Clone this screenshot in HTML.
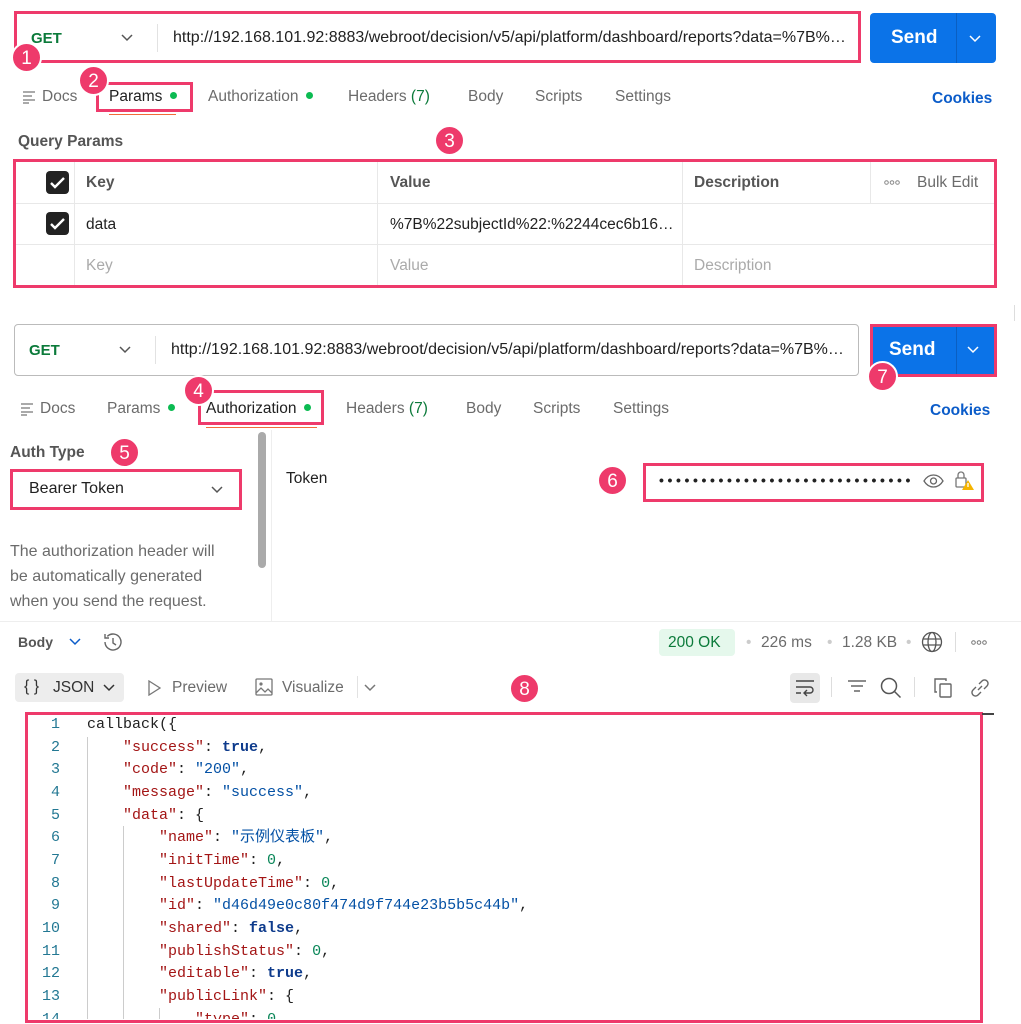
<!DOCTYPE html>
<html><head><meta charset="utf-8">
<style>
*{margin:0;padding:0;box-sizing:border-box}
body{width:1021px;height:1024px;background:#fff;position:relative;overflow:hidden;font-family:"Liberation Sans","Noto Sans CJK SC",sans-serif;color:#212121;font-size:15.5px}
.a{position:absolute;white-space:nowrap}
.pk{position:absolute;border:3px solid #ee3a6b}
.b{position:absolute;width:31px;height:31px;border-radius:50%;background:#ee3a6b;color:#fff;font-size:19px;text-align:center;line-height:29px;border:2px solid #fff}
.g{color:#6b6b6b}
.dot{display:inline-block;width:7px;height:7px;border-radius:50%;background:#0cbb52;margin-left:8px;vertical-align:2px}
.mono{font-family:"Liberation Mono","Noto Sans CJK SC",monospace;font-size:15px}
.k{color:#a31515}.s{color:#0451a5}.n{color:#098658}.t{color:#0e3b8c;font-weight:bold}
.ln{position:absolute;width:34px;text-align:right;color:#237893;left:26px}
.vl{position:absolute;width:1px;background:#ccc}
</style></head><body>

<!-- Section 1 -->
<div class="pk" style="left:14px;top:11px;width:847px;height:52px"></div>
<div class="a" style="left:31px;top:30px;color:#0b7a3a;font-weight:bold;font-size:15px">GET</div>
<svg class="a" style="left:121px;top:34px" width="12" height="8"><path d="M1 1l5 5 5-5" stroke="#555" fill="none" stroke-width="1.5"/></svg>
<div class="a" style="left:157px;top:24px;width:1px;height:28px;background:#e2e2e2"></div>
<div class="a" style="left:173px;top:29px;font-size:16px">http://192.168.101.92:8883/webroot/decision/v5/api/platform/dashboard/reports?data=%7B%…</div>
<div class="a" style="left:870px;top:13px;width:126px;height:50px;background:#0b73e8;border-radius:4px"></div>
<div class="a" style="left:891px;top:27px;color:#fff;font-weight:bold;font-size:19px">Send</div>
<div class="a" style="left:956px;top:13px;width:1px;height:50px;background:#0a5fc2"></div>
<svg class="a" style="left:969px;top:35px" width="12" height="8"><path d="M1 1l5 5 5-5" stroke="#fff" fill="none" stroke-width="1.5"/></svg>
<div class="b" style="left:11px;top:42px">1</div>

<svg class="a" style="left:22px;top:90px" width="14" height="14"><path d="M1 2h12M1 6h9M1 10h12M1 13h6" stroke="#777" stroke-width="1.3"/></svg>
<div class="a g" style="left:42px;top:88px">Docs</div>
<div class="a" style="left:109px;top:88px">Params<span class="dot"></span></div>
<div class="pk" style="left:96px;top:82px;width:97px;height:30px;"></div>
<div class="a" style="left:109px;top:114px;width:67px;height:1px;background:#f26b3a"></div>
<div class="b" style="left:78px;top:65px">2</div>
<div class="a g" style="left:208px;top:88px">Authorization<span class="dot"></span></div>
<div class="a g" style="left:348px;top:88px">Headers <span style="color:#0b7a3a">(7)</span></div>
<div class="a g" style="left:468px;top:88px">Body</div>
<div class="a g" style="left:535px;top:88px">Scripts</div>
<div class="a g" style="left:615px;top:88px">Settings</div>
<div class="a" style="left:932px;top:90px;color:#0b5cc9;font-weight:bold">Cookies</div>

<div class="a" style="left:18px;top:133px;font-weight:bold;color:#555">Query Params</div>
<div class="b" style="left:434px;top:125px">3</div>
<div class="pk" style="left:13px;top:159px;width:984px;height:129px"></div>
<div class="a" style="left:16px;top:203px;width:978px;height:1px;background:#e8e8e8"></div>
<div class="a" style="left:16px;top:244px;width:978px;height:1px;background:#e8e8e8"></div>
<div class="a" style="left:74px;top:162px;width:1px;height:123px;background:#e8e8e8"></div>
<div class="a" style="left:377px;top:162px;width:1px;height:123px;background:#e8e8e8"></div>
<div class="a" style="left:682px;top:162px;width:1px;height:123px;background:#e8e8e8"></div>
<div class="a" style="left:870px;top:162px;width:1px;height:41px;background:#e8e8e8"></div>
<svg class="a" style="left:46px;top:171px" width="23" height="23"><rect width="23" height="23" rx="4" fill="#222"/><path d="M5 12l4 4 9-9" stroke="#fff" stroke-width="2.4" fill="none"/></svg>
<svg class="a" style="left:46px;top:212px" width="23" height="23"><rect width="23" height="23" rx="4" fill="#222"/><path d="M5 12l4 4 9-9" stroke="#fff" stroke-width="2.4" fill="none"/></svg>
<div class="a" style="left:86px;top:174px;font-weight:bold;color:#555">Key</div>
<div class="a" style="left:390px;top:174px;font-weight:bold;color:#555">Value</div>
<div class="a" style="left:694px;top:174px;font-weight:bold;color:#555">Description</div>
<svg class="a" style="left:884px;top:180px" width="16" height="5"><circle cx="2.5" cy="2.5" r="1.8" fill="none" stroke="#888"/><circle cx="8" cy="2.5" r="1.8" fill="none" stroke="#888"/><circle cx="13.5" cy="2.5" r="1.8" fill="none" stroke="#888"/></svg>
<div class="a g" style="left:917px;top:174px">Bulk Edit</div>
<div class="a" style="left:86px;top:216px">data</div>
<div class="a" style="left:390px;top:216px">%7B%22subjectId%22:%2244cec6b16…</div>
<div class="a" style="left:86px;top:257px;color:#aaa">Key</div>
<div class="a" style="left:390px;top:257px;color:#aaa">Value</div>
<div class="a" style="left:694px;top:257px;color:#aaa">Description</div>

<div class="a" style="left:1014px;top:305px;width:1px;height:16px;background:#ddd"></div>

<!-- Section 2 -->
<div class="a" style="left:14px;top:324px;width:845px;height:52px;border:1px solid #bbb;border-radius:4px"></div>
<div class="a" style="left:29px;top:342px;color:#0b7a3a;font-weight:bold;font-size:15px">GET</div>
<svg class="a" style="left:119px;top:346px" width="12" height="8"><path d="M1 1l5 5 5-5" stroke="#555" fill="none" stroke-width="1.5"/></svg>
<div class="a" style="left:155px;top:336px;width:1px;height:28px;background:#e2e2e2"></div>
<div class="a" style="left:171px;top:341px;font-size:16px">http://192.168.101.92:8883/webroot/decision/v5/api/platform/dashboard/reports?data=%7B%…</div>
<div class="a" style="left:870px;top:324px;width:127px;height:53px;background:#0b73e8;border:3px solid #ee3a6b"></div>
<div class="a" style="left:889px;top:339px;color:#fff;font-weight:bold;font-size:19px">Send</div>
<div class="a" style="left:956px;top:327px;width:1px;height:47px;background:#0a5fc2"></div>
<svg class="a" style="left:967px;top:346px" width="12" height="8"><path d="M1 1l5 5 5-5" stroke="#fff" fill="none" stroke-width="1.5"/></svg>
<div class="b" style="left:867px;top:361px">7</div>

<svg class="a" style="left:20px;top:402px" width="14" height="14"><path d="M1 2h12M1 6h9M1 10h12M1 13h6" stroke="#777" stroke-width="1.3"/></svg>
<div class="a g" style="left:40px;top:400px">Docs</div>
<div class="a g" style="left:107px;top:400px">Params<span class="dot"></span></div>
<div class="a" style="left:206px;top:400px">Authorization<span class="dot"></span></div>
<div class="pk" style="left:198px;top:390px;width:126px;height:35px"></div>
<div class="a" style="left:206px;top:427px;width:111px;height:1px;background:#f26b3a"></div>
<div class="b" style="left:183px;top:375px">4</div>
<div class="a g" style="left:346px;top:400px">Headers <span style="color:#0b7a3a">(7)</span></div>
<div class="a g" style="left:466px;top:400px">Body</div>
<div class="a g" style="left:533px;top:400px">Scripts</div>
<div class="a g" style="left:613px;top:400px">Settings</div>
<div class="a" style="left:930px;top:402px;color:#0b5cc9;font-weight:bold">Cookies</div>

<div class="a" style="left:10px;top:444px;font-weight:bold;color:#555">Auth Type</div>
<div class="b" style="left:109px;top:437px">5</div>
<div class="pk" style="left:10px;top:469px;width:232px;height:41px"></div>
<div class="a" style="left:29px;top:480px;font-size:16px">Bearer Token</div>
<svg class="a" style="left:211px;top:486px" width="12" height="8"><path d="M1 1l5 5 5-5" stroke="#555" fill="none" stroke-width="1.5"/></svg>
<div class="a g" style="left:10px;top:543px;font-size:16px">The authorization header will</div>
<div class="a g" style="left:10px;top:568px;font-size:16px">be automatically generated</div>
<div class="a g" style="left:10px;top:593px;font-size:16px">when you send the request.</div>
<div class="a" style="left:258px;top:432px;width:8px;height:136px;background:#aaa;border-radius:4px"></div>
<div class="a" style="left:271px;top:430px;width:1px;height:191px;background:#eee"></div>
<div class="a" style="left:286px;top:470px">Token</div>
<div class="b" style="left:597px;top:465px">6</div>
<div class="pk" style="left:643px;top:463px;width:341px;height:39px"></div>
<div class="a" style="left:659px;top:472px;font-size:14px;letter-spacing:3.6px;font-weight:bold;color:#222">••••••••••••••••••••••••••••••</div>
<svg class="a" style="left:923px;top:474px" width="21" height="14"><path d="M1 7C4 2 8 1 10.5 1S17 2 20 7C17 12 13 13 10.5 13S4 12 1 7z" fill="none" stroke="#666" stroke-width="1.3"/><circle cx="10.5" cy="7" r="3" fill="none" stroke="#666" stroke-width="1.3"/></svg>
<svg class="a" style="left:955px;top:471px" width="20" height="20"><rect x="1" y="7" width="10" height="9" rx="1" fill="none" stroke="#777" stroke-width="1.3"/><path d="M3 7V4a3 3 0 016 0v3" fill="none" stroke="#777" stroke-width="1.3"/><path d="M13 9l6 10h-12z" fill="#f5b400"/><path d="M13 12v4" stroke="#fff" stroke-width="1.3"/></svg>

<div class="a" style="left:0;top:621px;width:1021px;height:1px;background:#eee"></div>

<!-- Section 3 -->
<div class="a" style="left:18px;top:634px;font-size:14px;font-weight:bold;color:#555">Body</div>
<svg class="a" style="left:69px;top:638px" width="12" height="8"><path d="M1 1l5 5 5-5" stroke="#0b5cc9" fill="none" stroke-width="1.5"/></svg>
<svg class="a" style="left:101px;top:631px" width="22" height="22"><path d="M4 11a8 8 0 1 0 2.3-5.6M4 3v4h4" fill="none" stroke="#666" stroke-width="1.4"/><path d="M12 7v5l3 2" fill="none" stroke="#666" stroke-width="1.4"/></svg>
<div class="a" style="left:659px;top:629px;width:76px;height:27px;background:#e5f8ec;border-radius:4px"></div>
<div class="a" style="left:668px;top:634px;color:#0b7a3a">200 OK</div>
<div class="a" style="left:746px;top:634px;color:#ccc">•</div>
<div class="a g" style="left:761px;top:634px">226 ms</div>
<div class="a" style="left:827px;top:634px;color:#ccc">•</div>
<div class="a g" style="left:842px;top:634px">1.28 KB</div>
<div class="a" style="left:906px;top:634px;color:#ccc">•</div>
<svg class="a" style="left:921px;top:631px" width="22" height="22"><circle cx="11" cy="11" r="9.5" fill="none" stroke="#555" stroke-width="1.3"/><ellipse cx="11" cy="11" rx="4" ry="9.5" fill="none" stroke="#555" stroke-width="1.3"/><path d="M2 8h18M2 14h18" stroke="#555" stroke-width="1.3"/></svg>
<div class="a" style="left:955px;top:632px;width:1px;height:20px;background:#ddd"></div>
<svg class="a" style="left:971px;top:640px" width="16" height="5"><circle cx="2.5" cy="2.5" r="1.8" fill="none" stroke="#777"/><circle cx="8" cy="2.5" r="1.8" fill="none" stroke="#777"/><circle cx="13.5" cy="2.5" r="1.8" fill="none" stroke="#777"/></svg>

<div class="a" style="left:15px;top:673px;width:109px;height:29px;background:#ededed;border-radius:4px"></div>
<div class="a" style="left:24px;top:678px;font-size:16px;color:#333">{ }</div>
<div class="a" style="left:53px;top:679px;color:#333">JSON</div>
<svg class="a" style="left:103px;top:684px" width="12" height="8"><path d="M1 1l5 5 5-5" stroke="#333" fill="none" stroke-width="1.5"/></svg>
<svg class="a" style="left:147px;top:680px" width="14" height="16"><path d="M2 1l11 7-11 7z" fill="none" stroke="#777" stroke-width="1.3"/></svg>
<div class="a g" style="left:172px;top:679px">Preview</div>
<svg class="a" style="left:255px;top:678px" width="18" height="18"><rect x="1" y="1" width="16" height="16" rx="1" fill="none" stroke="#777" stroke-width="1.3"/><circle cx="6" cy="6" r="1.6" fill="#777"/><path d="M1 15l5-5 4 4 3-3 4 4" fill="none" stroke="#777" stroke-width="1.3"/></svg>
<div class="a g" style="left:282px;top:679px">Visualize</div>
<div class="a" style="left:357px;top:676px;width:1px;height:22px;background:#e2e2e2"></div>
<svg class="a" style="left:364px;top:684px" width="12" height="8"><path d="M1 1l5 5 5-5" stroke="#777" fill="none" stroke-width="1.5"/></svg>
<div class="b" style="left:509px;top:673px">8</div>
<div class="a" style="left:790px;top:673px;width:30px;height:30px;background:#e8e8e8;border-radius:4px"></div>
<svg class="a" style="left:794px;top:678px" width="22" height="20"><path d="M2 3h18M2 9h14a3 3 0 010 6h-5M13 12l-3 3 3 3M2 15h5" fill="none" stroke="#444" stroke-width="1.4"/></svg>
<div class="a" style="left:831px;top:677px;width:1px;height:20px;background:#ddd"></div>
<svg class="a" style="left:847px;top:679px" width="20" height="16"><path d="M1 2h18M4 7h12M7 12h6" stroke="#666" stroke-width="1.4"/></svg>
<svg class="a" style="left:880px;top:677px" width="22" height="22"><circle cx="9" cy="9" r="7.5" fill="none" stroke="#555" stroke-width="1.5"/><path d="M14.5 14.5l6 6" stroke="#555" stroke-width="1.5"/></svg>
<div class="a" style="left:914px;top:677px;width:1px;height:20px;background:#ddd"></div>
<svg class="a" style="left:933px;top:677px" width="20" height="22"><path d="M4 15H2V2h11v2" fill="none" stroke="#666" stroke-width="1.4"/><rect x="7" y="7" width="11" height="13" rx="1" fill="none" stroke="#666" stroke-width="1.4"/></svg>
<svg class="a" style="left:969px;top:677px" width="22" height="22"><path d="M9 13l4-4M7 10l-3 3a3.5 3.5 0 005 5l3-3M15 12l3-3a3.5 3.5 0 00-5-5l-3 3" fill="none" stroke="#666" stroke-width="1.4"/></svg>

<div class="pk" style="left:25px;top:712px;width:958px;height:311px"></div>
<div class="a" style="left:982px;top:713px;width:12px;height:2px;background:#444"></div>
<div class="vl" style="left:87px;top:737px;height:282px"></div>
<div class="vl" style="left:123px;top:826px;height:193px"></div>
<div class="vl" style="left:159px;top:1008px;height:11px"></div>
<div class="a mono" style="left:28px;top:714px;width:950px;height:305px;overflow:hidden;line-height:22.67px">
<div class="ln" style="left:0;top:0;width:32px;line-height:22.67px">1<br>2<br>3<br>4<br>5<br>6<br>7<br>8<br>9<br>10<br>11<br>12<br>13<br>14</div>
<div class="a" style="left:59px;top:0;line-height:22.67px">callback({<br>
&nbsp;&nbsp;&nbsp;&nbsp;<span class="k">"success"</span>: <span class="t">true</span>,<br>
&nbsp;&nbsp;&nbsp;&nbsp;<span class="k">"code"</span>: <span class="s">"200"</span>,<br>
&nbsp;&nbsp;&nbsp;&nbsp;<span class="k">"message"</span>: <span class="s">"success"</span>,<br>
&nbsp;&nbsp;&nbsp;&nbsp;<span class="k">"data"</span>: {<br>
&nbsp;&nbsp;&nbsp;&nbsp;&nbsp;&nbsp;&nbsp;&nbsp;<span class="k">"name"</span>: <span class="s">"示例仪表板"</span>,<br>
&nbsp;&nbsp;&nbsp;&nbsp;&nbsp;&nbsp;&nbsp;&nbsp;<span class="k">"initTime"</span>: <span class="n">0</span>,<br>
&nbsp;&nbsp;&nbsp;&nbsp;&nbsp;&nbsp;&nbsp;&nbsp;<span class="k">"lastUpdateTime"</span>: <span class="n">0</span>,<br>
&nbsp;&nbsp;&nbsp;&nbsp;&nbsp;&nbsp;&nbsp;&nbsp;<span class="k">"id"</span>: <span class="s">"d46d49e0c80f474d9f744e23b5b5c44b"</span>,<br>
&nbsp;&nbsp;&nbsp;&nbsp;&nbsp;&nbsp;&nbsp;&nbsp;<span class="k">"shared"</span>: <span class="t">false</span>,<br>
&nbsp;&nbsp;&nbsp;&nbsp;&nbsp;&nbsp;&nbsp;&nbsp;<span class="k">"publishStatus"</span>: <span class="n">0</span>,<br>
&nbsp;&nbsp;&nbsp;&nbsp;&nbsp;&nbsp;&nbsp;&nbsp;<span class="k">"editable"</span>: <span class="t">true</span>,<br>
&nbsp;&nbsp;&nbsp;&nbsp;&nbsp;&nbsp;&nbsp;&nbsp;<span class="k">"publicLink"</span>: {<br>
&nbsp;&nbsp;&nbsp;&nbsp;&nbsp;&nbsp;&nbsp;&nbsp;&nbsp;&nbsp;&nbsp;&nbsp;<span class="k">"type"</span>: <span class="n">0</span>,</div>
</div>
</body></html>
